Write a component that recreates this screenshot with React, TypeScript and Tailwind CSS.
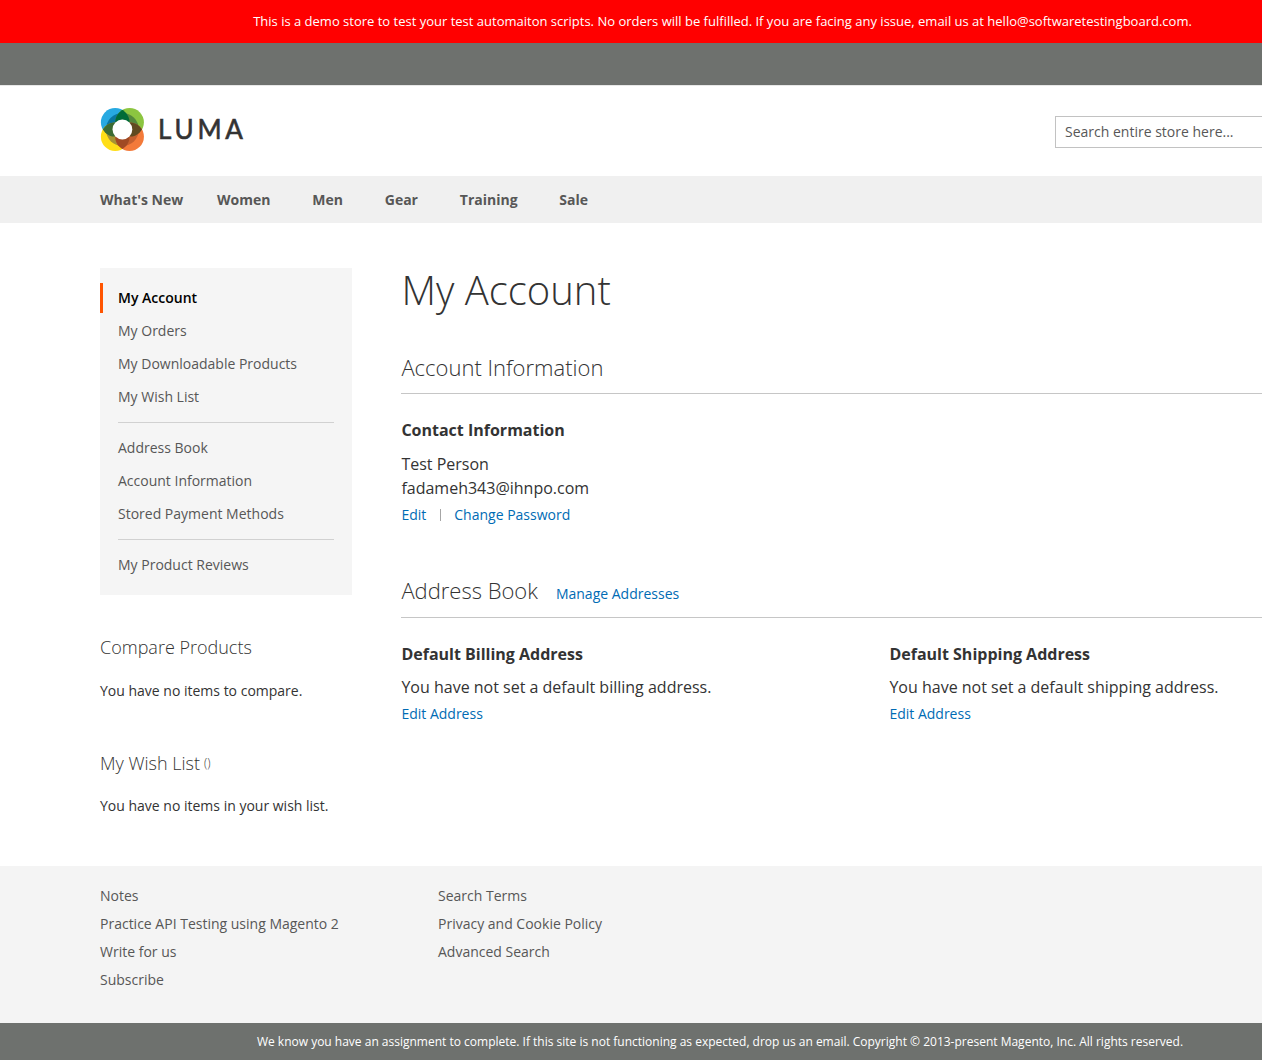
import React from "react";

const accountLinks = [
  ["My Orders", "My Downloadable Products", "My Wish List"],
  ["Address Book", "Account Information", "Stored Payment Methods"],
  ["My Product Reviews"],
];

const footerLinks = [
  ["Notes", "Practice API Testing using Magento 2", "Write for us", "Subscribe"],
  ["Search Terms", "Privacy and Cookie Policy", "Advanced Search"],
];

function Logo() {
  return (
    <div className="flex items-start">
      <svg width="46" height="44" viewBox="-22.4 -21.5 46 44" className="block">
        <defs>
          <clipPath id="tl"><circle cx="-7.2" cy="-7.2" r="14.3" /></clipPath>
          <clipPath id="tr"><circle cx="7.2" cy="-7.2" r="14.3" /></clipPath>
          <clipPath id="bl"><circle cx="-7.2" cy="7.2" r="14.3" /></clipPath>
          <clipPath id="br"><circle cx="7.2" cy="7.2" r="14.3" /></clipPath>
        </defs>
        <circle cx="-7.2" cy="-7.2" r="14.3" fill="#27a9e1" />
        <circle cx="7.2" cy="-7.2" r="14.3" fill="#8cc540" />
        <circle cx="-7.2" cy="7.2" r="14.3" fill="#ffde17" />
        <circle cx="7.2" cy="7.2" r="14.3" fill="#f37a3a" />
        <circle r="16.5" fill="#0a759e" clipPath="url(#tl)" />
        <circle r="16.5" fill="#54883c" clipPath="url(#tr)" />
        <circle r="16.5" fill="#a69433" clipPath="url(#bl)" />
        <circle r="16.5" fill="#c5602f" clipPath="url(#br)" />
        <g clipPath="url(#tl)">
          <circle cx="7.2" cy="-7.2" r="14.3" fill="#006b37" />
          <circle cx="-7.2" cy="7.2" r="14.3" fill="#3c6b33" />
        </g>
        <g clipPath="url(#br)">
          <circle cx="7.2" cy="-7.2" r="14.3" fill="#604a20" />
          <circle cx="-7.2" cy="7.2" r="14.3" fill="#a04a24" />
        </g>
        <circle r="9.9" fill="#fff" />
      </svg>
      <span className="ml-[12px] font-['Lato'] text-[26px] leading-[42px] tracking-[3.8px] text-[#333] [-webkit-text-stroke:0.6px_#333]">
        LUMA
      </span>
    </div>
  );
}

function Separator() {
  return <div className="mx-[18px] mt-[10px] mb-[10px] h-px bg-[#d1d1d1]" />;
}

function Sidebar() {
  return (
    <aside className="w-[252px] shrink-0">
      <nav className="bg-[#f5f5f5] py-[15px] text-[14px] leading-5 text-[#575757]">
        <div className="mb-[3px] border-l-[3px] border-[#ff5501] py-[5px] pl-[15px] font-semibold text-black">
          My Account
        </div>
        {accountLinks.map((group, i) => (
          <React.Fragment key={i}>
            {i > 0 && <Separator />}
            <div className="flex flex-col gap-[3px]">
              {group.map((t) => (
                <a key={t} className="py-[5px] pl-[18px]">{t}</a>
              ))}
            </div>
          </React.Fragment>
        ))}
      </nav>
      <h3 className="mt-[42px] text-[18px] leading-5 font-light">Compare Products</h3>
      <p className="mt-6 text-[14px] leading-5">You have no items to compare.</p>
      <h3 className="mt-[52px] flex h-5 text-[18px] leading-5 font-light">
        My Wish List <span className="ml-1 text-[12px]">()</span>
      </h3>
      <p className="mt-[23px] text-[14px] leading-5">You have no items in your wish list.</p>
    </aside>
  );
}

function AddressBox({ kind }: { kind: string }) {
  return (
    <div className="w-[488px] shrink-0">
      <h4 className="text-[16px] leading-[18px] font-bold">Default {kind} Address</h4>
      <p className="mt-3 text-[16px] leading-6">
        You have not set a default {kind.toLowerCase()} address.
      </p>
      <a className="mt-[5px] block text-[14px] leading-5 text-[#006bb4]">Edit Address</a>
    </div>
  );
}

export default function App() {
  return (
    <div className="h-[1060px] w-full overflow-hidden bg-white font-['Open_Sans',sans-serif] text-[#333]">
      <div className="w-[1440px]">
        <div className="h-[43px] bg-[#ff0000] pl-[5px] text-center text-[13px] leading-[43px] text-white">
          This is a demo store to test your test automaiton scripts. No orders will be fulfilled. If you are facing any issue, email us at hello@softwaretestingboard.com.
        </div>
        <div className="h-[43px] border-b border-[#e8e8e8] bg-[#6e716e]" />
        <header className="flex h-[90px] justify-between px-[100px]">
          <div className="pt-[22px]"><Logo /></div>
          <div className="mt-[30px] h-8 w-[285px] border border-[#c2c2c2] pl-[9px] text-[14px] leading-[30px] text-[#575757]">
            Search entire store here...
          </div>
        </header>
        <nav className="flex h-[47px] gap-[41.8px] bg-[#f0f0f0] pl-[100px] text-[14px] leading-[47px] font-bold text-[#575757]">
          <a className="-mr-2">What's New</a>
          <a>Women</a>
          <a>Men</a>
          <a>Gear</a>
          <a>Training</a>
          <a>Sale</a>
        </nav>
        <div className="flex h-[643px] pt-[45px] pl-[100px]">
          <Sidebar />
          <main className="ml-[49.4px] w-[939px]">
            <h1 className="text-[40px] leading-[44px] font-light">My Account</h1>
            <h2 className="mt-[43px] border-b border-[#c6c6c6] pb-[14px] text-[22px] leading-6 font-light">
              Account Information
            </h2>
            <h4 className="mt-[27px] text-[16px] leading-[18px] font-bold">Contact Information</h4>
            <p className="mt-[13px] text-[16px] leading-6">
              Test Person
              <br />
              fadameh343@ihnpo.com
            </p>
            <div className="mt-[5px] flex items-center text-[14px] leading-5 text-[#006bb4]">
              <a>Edit</a>
              <span className="mr-[13.5px] ml-[13.5px] h-3 w-px bg-[#a6a6a6]" />
              <a>Change Password</a>
            </div>
            <div className="mt-[53px] flex h-10 items-baseline border-b border-[#c6c6c6]">
              <h2 className="text-[22px] leading-6 font-light">Address Book</h2>
              <a className="ml-[18px] text-[14px] leading-5 text-[#006bb4]">Manage Addresses</a>
            </div>
            <div className="mt-[27px] flex">
              <AddressBox kind="Billing" />
              <AddressBox kind="Shipping" />
            </div>
          </main>
        </div>
        <footer>
          <div className="flex h-[157px] bg-[#f4f4f4] pt-4 pl-[100px] text-[14px] leading-7 text-[#575757]">
            {footerLinks.map((col, i) => (
              <div key={i} className="flex w-[338px] flex-col">
                {col.map((t) => <a key={t}>{t}</a>)}
              </div>
            ))}
          </div>
          <div className="h-[37px] bg-[#6e716e] text-center text-[12px] leading-[37px] text-white">
            We know you have an assignment to complete. If this site is not functioning as expected, drop us an email. Copyright © 2013-present Magento, Inc. All rights reserved.
          </div>
        </footer>
      </div>
    </div>
  );
}
